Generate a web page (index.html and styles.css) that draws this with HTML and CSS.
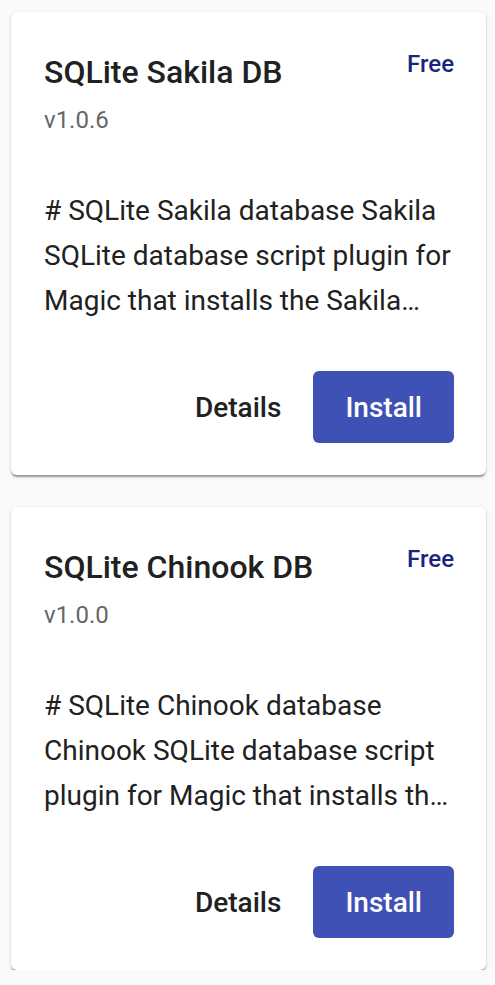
FILE: index.html
```html
<!DOCTYPE html>
<html lang="en">
<head>
<meta charset="utf-8">
<title>Plugins</title>
<link rel="stylesheet" href="styles.css">
</head>
<body>
<div class="list">
  <div class="card">
    <div class="card-head">
      <div class="titles">
        <div class="title">SQLite Sakila DB</div>
        <div class="version">v1.0.6</div>
      </div>
      <div class="price">Free</div>
    </div>
    <p class="desc"># SQLite Sakila database Sakila SQLite database script plugin for Magic that installs the Sakila database into your Magic installation.</p>
    <div class="actions">
      <button class="btn btn-text">Details</button>
      <button class="btn btn-primary">Install</button>
    </div>
  </div>
  <div class="card">
    <div class="card-head">
      <div class="titles">
        <div class="title">SQLite Chinook DB</div>
        <div class="version">v1.0.0</div>
      </div>
      <div class="price">Free</div>
    </div>
    <p class="desc"># SQLite Chinook database Chinook SQLite database script plugin for Magic that installs the Chinook database into your Magic installation.</p>
    <div class="actions">
      <button class="btn btn-text">Details</button>
      <button class="btn btn-primary">Install</button>
    </div>
  </div>
</div>
</body>
</html>
```
FILE: styles.css
```css
html, body {
  margin: 0;
  padding: 0;
  background: #fafafa;
}
body {
  font-family: Roboto, "Liberation Sans", sans-serif;
  color: rgba(0, 0, 0, 0.87);
}
.list {
  display: flex;
  flex-direction: column;
  gap: 32px;
  padding: 12px 9px 0 11px;
}
.card {
  background: #fff;
  border-radius: 6px;
  box-shadow: 0 3px 1.5px -1.5px rgba(0,0,0,0.2), 0 1.5px 1.5px 0 rgba(0,0,0,0.14), 0 1.5px 4px 0 rgba(0,0,0,0.12);
  padding: 41px 32px 32px 33px;
}
.card-head {
  display: flex;
  justify-content: space-between;
  align-items: flex-start;
}
.title {
  font-size: 32px;
  font-weight: 500;
  line-height: 38.4px;
  color: #212121;
}
.version {
  margin-top: 14.6px;
  font-size: 24px;
  line-height: 28px;
  color: #666;
}
.price {
  margin-top: -3px;
  font-size: 24px;
  line-height: 28px;
  font-weight: 500;
  color: #1a237e;
}
.desc {
  margin: 53.6px 0 0;
  font-size: 28px;
  line-height: 45px;
  color: #212121;
  display: -webkit-box;
  -webkit-box-orient: vertical;
  -webkit-line-clamp: 3;
  overflow: hidden;
}
.actions {
  margin-top: 48.6px;
  display: flex;
  justify-content: flex-end;
  gap: 16px;
}
.btn {
  font-family: inherit;
  font-size: 28px;
  font-weight: 500;
  height: 72px;
  border: 0;
  border-radius: 6px;
  padding: 0 32px;
  cursor: pointer;
}
.btn-text {
  background: transparent;
  color: #212121;
  padding: 0 16px;
}
.btn-primary {
  background: #3f51b5;
  color: #fff;
}
```
